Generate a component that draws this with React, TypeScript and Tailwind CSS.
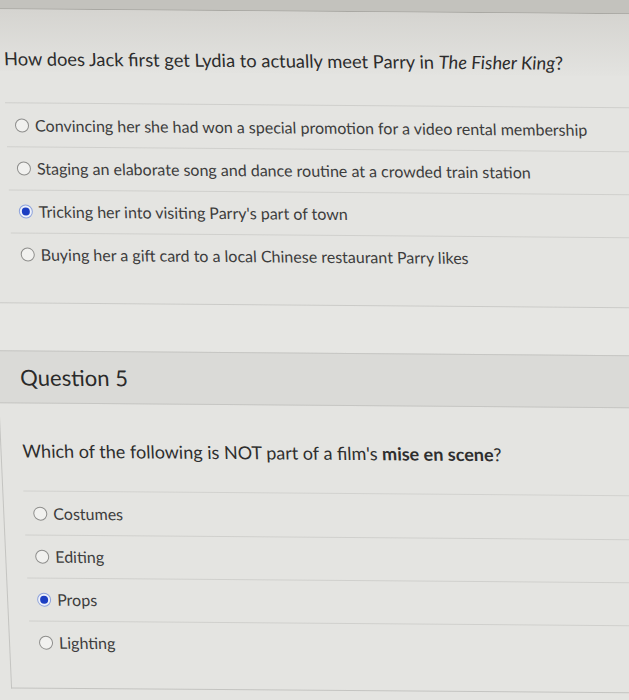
const q1Options = [
  { text: "Convincing her she had won a special promotion for a video rental membership", checked: false },
  { text: "Staging an elaborate song and dance routine at a crowded train station", checked: false },
  { text: "Tricking her into visiting Parry's part of town", checked: true },
  { text: "Buying her a gift card to a local Chinese restaurant Parry likes", checked: false },
]

const q5Options = [
  { text: "Costumes", checked: false },
  { text: "Editing", checked: false },
  { text: "Props", checked: true },
  { text: "Lighting", checked: false },
]

function Radio({ checked }: { checked: boolean }) {
  if (checked) {
    return (
      <span className="flex h-[14px] w-[14px] shrink-0 items-center justify-center rounded-full border border-[#8ea3dc] bg-[#eef1fa]">
        <span className="h-[8px] w-[8px] rounded-full bg-[#1c3ec2]" />
      </span>
    )
  }
  return <span className="h-[14px] w-[14px] shrink-0 rounded-full border border-[#8e8e8c] bg-[#f1f1ef]" />
}

function OptionRow({ text, checked }: { text: string; checked: boolean }) {
  return (
    <li className="flex h-[43px] items-center gap-[6px] border-t border-[#d0d0cd] pl-[9px] first:border-t-0">
      <Radio checked={checked} />
      <span className="text-[16px] text-[#3d3d3d]">{text}</span>
    </li>
  )
}

export default function App() {
  return (
    <div className="h-[700px] w-[629px] overflow-hidden bg-[#e4e4e1]" style={{ fontFamily: "Lato, 'Open Sans', sans-serif" }}>
      <div className="-ml-[40px] -mt-[10px] w-[740px] origin-top-left rotate-[0.45deg] skew-x-[3deg] pl-[40px]">
        <div className="-ml-[40px] h-[19px] border-b border-[#a9a8a3] bg-[#c3c2bd]" />
        <div className="-ml-[40px] bg-gradient-to-b from-[#d5d4d0] to-[#e3e3e0] pt-[36px] pl-[40px]">
          <h2 className="pl-[1px] text-[18.3px] leading-[26px] text-[#2c2c2c]">
            How does Jack first get Lydia to actually meet Parry in <i>The Fisher King</i>?
          </h2>
        </div>
        <ul className="mt-[31px] border-t border-[#cfcfcc]">
          {q1Options.map((o, i) => (
            <OptionRow key={i} text={o.text} checked={o.checked} />
          ))}
        </ul>
        <div className="-ml-[40px] mt-[27px] h-[48px] border-t border-[#cbcbc8] bg-[#e6e6e3]" />
        <section className="-ml-[20px] border-b border-l border-[#c4c4c1] pl-[20px] pb-[2px]">
          <div className="-ml-[40px] flex h-[53px] items-center border-y border-[#c6c6c3] bg-[#dadad7] pl-[42px]">
            <h3 className="text-[22px] text-[#2a2a2a]">Question 5</h3>
          </div>
          <p className="pt-[35px] pl-[1px] text-[18px] leading-[24px] text-[#2e2e2e]">
            Which of the following is NOT part of a film's <b>mise en scene</b>?
          </p>
          <ul className="mt-[28px] border-t border-[#d2d2cf] pb-[22px]">
            {q5Options.map((o, i) => (
              <OptionRow key={i} text={o.text} checked={o.checked} />
            ))}
          </ul>
        </section>
      </div>
    </div>
  )
}
